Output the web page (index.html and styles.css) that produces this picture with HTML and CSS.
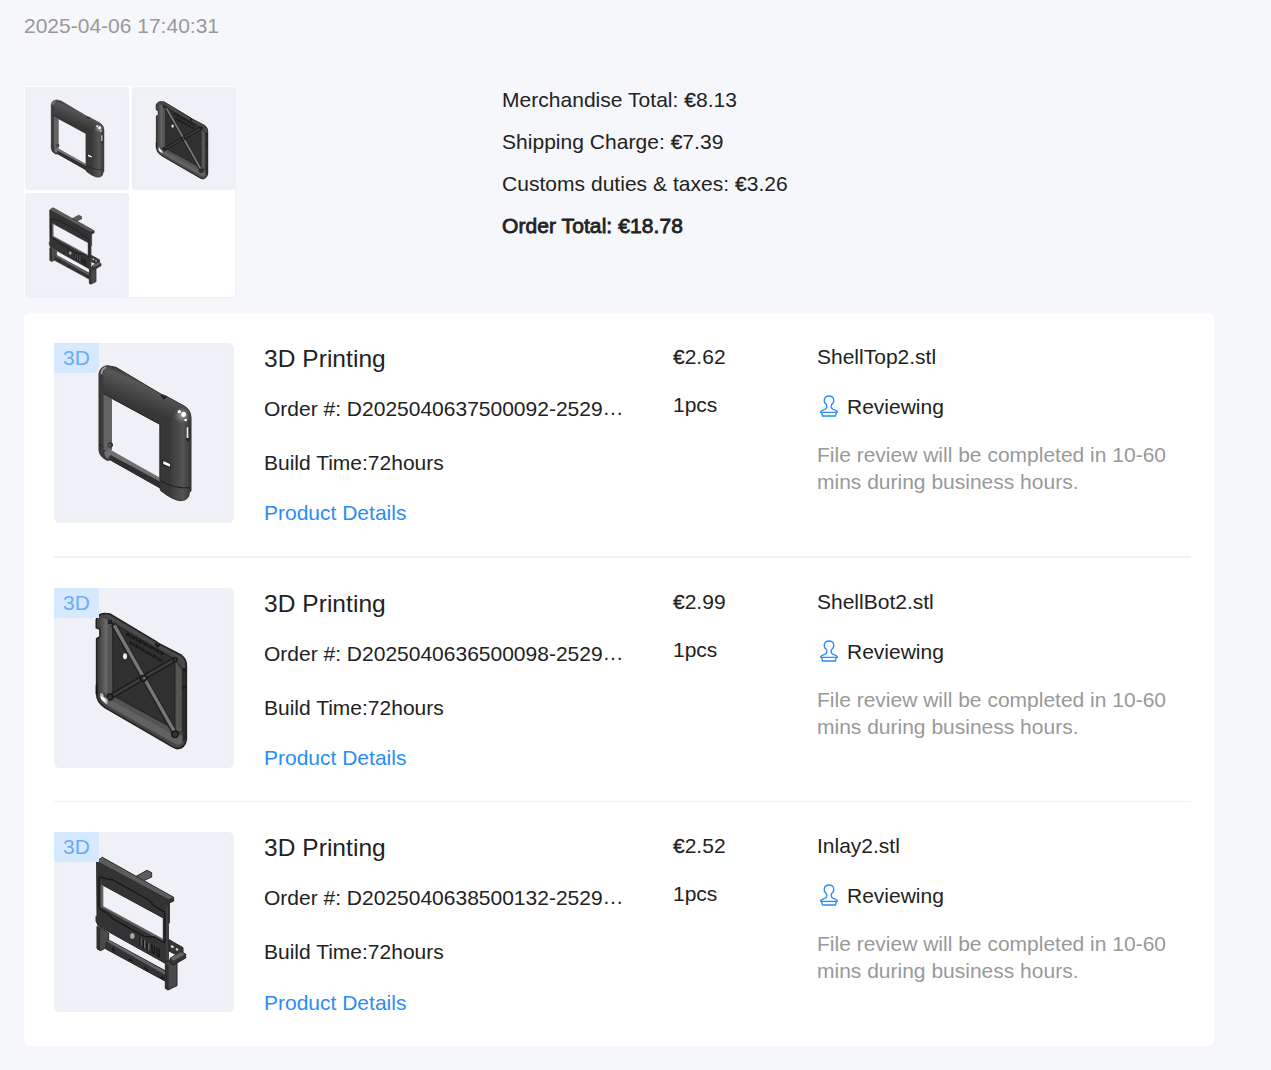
FILE: index.html
```html
<!DOCTYPE html>
<html lang="en">
<head>
<meta charset="utf-8">
<title>Order details</title>
<link rel="stylesheet" href="styles.css">
</head>
<body>
<svg class="defs" aria-hidden="true">
  <defs>
    <linearGradient id="shell" gradientUnits="userSpaceOnUse" x1="290" y1="130" x2="250" y2="230">
      <stop offset="0" stop-color="#353535"/><stop offset=".2" stop-color="#575757"/><stop offset=".5" stop-color="#474747"/><stop offset=".85" stop-color="#363636"/>
    </linearGradient>
    <linearGradient id="side" x1="0" y1="0" x2="1" y2="0">
      <stop offset="0" stop-color="#363636"/><stop offset=".3" stop-color="#383838"/><stop offset=".75" stop-color="#555"/><stop offset="1" stop-color="#383838"/>
    </linearGradient>
    <linearGradient id="lip" x1="0" y1="0" x2="1" y2="0">
      <stop offset="0" stop-color="#3e3e3e"/><stop offset=".6" stop-color="#696969"/><stop offset="1" stop-color="#505050"/>
    </linearGradient>
    <radialGradient id="shine"><stop offset="0" stop-color="#aaa"/><stop offset=".5" stop-color="#777" stop-opacity=".7"/><stop offset="1" stop-color="#555" stop-opacity="0"/></radialGradient>
    <symbol id="shell-top" viewBox="12 24 540 540">
      <path fill="url(#shell)" fill-rule="evenodd" stroke="#303030" stroke-width="3" d="M147 115Q151 94 173 92L198 97L334 178L346 182L404 214Q422 225 423 248V468L418 472Q418 496 392 497Q369 496 332 467L330 459L181 375L171 376Q148 364 147 346ZM160 176V344L181 348L330 436V268Z"/>
      <path fill="url(#side)" d="M330 266L362 262Q368 228 388 222Q420 218 422 248V468L418 472Q418 495 392 496Q369 495 332 466L330 459Z"/>
      <ellipse cx="397" cy="241" rx="28" ry="27" fill="url(#shine)"/>
      <path fill="#626262" d="M160 177L186 191V344L178 350L160 344Z"/>
      <path fill="#3b3b3b" d="M149 120L160 110V345L171 374Q150 362 149 344Z"/>
      <path fill="#707070" d="M162 352L176 342L192 350L330 428V440L182 360L172 372Q164 366 162 352Z"/>
      <path fill="#2f2f2f" d="M180 361L331 441V460L181 375Z"/>
      <path d="M160 176L330 268V438" fill="none" stroke="#2b2b2b" stroke-width="3"/>
      <path d="M148 328L160 336M332 437Q375 463 420 458" fill="none" stroke="#1e1e1e" stroke-width="3"/>
      <circle cx="181" cy="330" r="8" fill="#333"/><circle cx="179" cy="331" r="3" fill="#777"/>
      <path d="M155 118Q153 103 168 97" fill="none" stroke="#999" stroke-width="5"/>
      <path d="M334 180L342 190L349 184" fill="none" stroke="#181818" stroke-width="5"/>
      <g fill="#fff"><circle cx="388" cy="230" r="5"/><ellipse cx="401" cy="238" rx="7" ry="8"/><circle cx="407" cy="255" r="4"/></g>
      <path d="M410 274L423 280V308L410 306Z" fill="#333"/><path d="M410 277H415V309H410Z" fill="#eee"/><path d="M407 309L420 312L412 321Z" fill="#222"/>
      <path d="M335 374L363 385V400L337 391Z" fill="#252525"/><path d="M340 378L360 387V395L340 387Z" fill="#fff"/>
    </symbol>
    <symbol id="shell-bottom" viewBox="12 24 540 540">
      <path fill="#454545" stroke="#232323" stroke-width="5" d="M139 143V120Q144 100 165 101L180 102L317 184L330 193L394 226Q409 237 409 258V478Q405 504 382 506Q370 503 350 490L165 383Q140 365 140 342V176L150 170V148Z"/>
      <path fill="url(#lip)" d="M145 126Q150 111 166 116L184 127V347L164 338L145 343V176L152 170V144Z"/>
      <path fill="#626262" d="M165 339L190 357L370 458L396 467V486Q393 500 375 491L174 377Z"/>
      <path fill="#545454" d="M174 118L188 130V350L366 446V462L180 359L172 340Z"/>
      <path fill="#303030" stroke="#202020" stroke-width="3" d="M188 129L375 238V448L189 345Z"/>
      <path fill="#555" stroke="#292929" stroke-width="3" d="M375 238L397 270V454L383 458L375 446Z"/>
      <path fill="#292929" d="M398 263H409V478L399 484Z"/>
      <path fill="none" stroke="#4c4c4c" stroke-width="6" d="M165 104L317 193L394 234Q402 242 402 265"/>
      <path fill="none" stroke="#1b1b1b" stroke-width="16" d="M182 350L375 238"/><path fill="none" stroke="#3d3d3d" stroke-width="8" d="M182 350L375 238"/>
      <path fill="none" stroke="#222" stroke-width="17" d="M190 132L377 463"/><path fill="none" stroke="#777" stroke-width="10" d="M193 136L374 456"/>
      <g fill="#333" stroke="#171717" stroke-width="4"><circle cx="180" cy="126" r="5"/><circle cx="375" cy="239" r="6"/><circle cx="280" cy="295" r="9"/><circle cx="180" cy="351" r="9"/><circle cx="375" cy="463" r="10"/></g>
      <circle cx="283" cy="294" r="4" fill="#707070"/>
      <g fill="none" stroke="#171717" stroke-width="9" stroke-dasharray="9 3 5 3"><path d="M230 162L340 222"/><path d="M239 187L338 244"/></g>
      <path fill="none" stroke="#171717" stroke-width="6" d="M316 190L323 199L330 194M397 325L409 320M400 265L407 275M140 314V342"/>
      <ellipse cx="225" cy="229" rx="6" ry="9" fill="#eee"/>
      <path d="M150 341Q161 337 161 350L173 357L172 374Q150 363 150 341Z" fill="#bbb"/><path d="M151 349Q162 349 169 367Q152 362 151 349Z" fill="#fff"/>
    </symbol>
    <symbol id="inlay" viewBox="12 21 540 540">
      <path fill="#5c5c5c" stroke="#292929" stroke-width="3" d="M251 158L291 136L305 143V156L270 172L252 166Z"/>
      <path fill="#333" d="M253 158L270 164V173L252 166Z"/>
      <path fill="#4b4b4b" stroke="#292929" stroke-width="3" d="M141 304L176 324V365L151 377L141 371Z"/>
      <path fill="#303030" d="M141 304L151 309V377L141 372Z"/>
      <path fill="#333" fill-rule="evenodd" stroke="#262626" stroke-width="3" d="M140 109L157 97L371 217V228L358 234V293L355 298V420L344 414L145 303L138 288V275L141 271ZM152 177V246L340 350V279Z"/>
      <path fill="#5d5d5d" d="M142 108L157 98L369 217L356 223Z"/>
      <path fill="#606060" d="M152 177L160 182V244L339 341V350L152 246Z"/>
      <path fill="#444" d="M348 246L353 243V404L348 407Z"/>
      <path fill="none" stroke="#171717" stroke-width="4" d="M148 155L177 164L186 163L296 225L312 242L345 262M147 249L174 267L188 281L282 334L313 336L345 354M147 156V247M345 264V352"/>
      <path fill="#333" stroke="#222" stroke-width="3" d="M168 353L180 347L345 437V468L168 372Z"/>
      <path fill="#656565" d="M169 349L181 347L345 439V449Z"/>
      <path fill="none" stroke="#171717" stroke-width="5" d="M187 369L193 379M235 402L248 407M282 426L294 438M332 457L342 459"/>
      <path fill="#4a4a4a" stroke="#272727" stroke-width="3" d="M346 415L381 394V482L354 495L346 490Z"/><path fill="#303030" d="M346 417L356 420V495L346 490Z"/>
      <path fill="#363636" stroke="#222" stroke-width="3" d="M357 344L399 368V383L407 387V399L370 420L360 416V400L378 389L357 378Z"/>
      <path fill="#666" d="M362 399L393 382L405 388L370 407Z"/>
      <path fill="none" stroke="#ddd" stroke-width="6" d="M363 363L371 367M378 372L384 375"/>
      <ellipse cx="247" cy="333" rx="8" ry="10" fill="#aaa" stroke="#222" stroke-width="2"/>
      <g fill="none" stroke="#6b6b6b" stroke-width="4"><path d="M273 340V362M284 346V369M296 354V376"/></g><g fill="none" stroke="#161616" stroke-width="4"><path d="M269 338V362M280 344V369M291 352V376M306 358V382L313 386V363M321 366V391L328 395V371"/></g>
    </symbol>
    <symbol id="stamp" viewBox="0 0 20 22">
      <path fill="none" stroke="#2a8df5" stroke-width="1.3" stroke-linejoin="round" d="M7.400 9.600C3.900 7 4.600 1 10 1S16.100 7 12.600 9.600C11.900 11.300 12.300 13.500 14.200 14.300C16.500 15 18.400 15.300 18.400 17.300H1.600C1.600 15.300 3.500 15 5.800 14.300C7.700 13.500 8.100 11.300 7.400 9.600ZM2.700 17.500L3.500 21H16.500L17.300 17.500"/>
    </symbol>
  </defs>
</svg>
<main class="page">
  <time class="date">2025-04-06 17:40:31</time>
  <section class="summary">
    <div class="thumbs">
      <svg class="thumb"><use href="#shell-top"/></svg>
      <svg class="thumb"><use href="#shell-bottom"/></svg>
      <svg class="thumb"><use href="#inlay"/></svg>
    </div>
    <div class="totals">
      <p>Merchandise Total: <span class="euro">€</span>8.13</p>
      <p>Shipping Charge: <span class="euro">€</span>7.39</p>
      <p>Customs duties &amp; taxes: <span class="euro">€</span>3.26</p>
      <p class="grand">Order Total: €18.78</p>
    </div>
  </section>
  <section class="card">
    <article class="item">
      <div class="preview"><svg class="model"><use href="#shell-top"/></svg><span class="tag tag-round">3D</span></div>
      <div class="info">
        <h2>3D Printing</h2>
        <p class="number">Order #: D2025040637500092-2529<span class="dots">…</span></p>
        <p class="build">Build Time:72hours</p>
        <a class="details">Product Details</a>
      </div>
      <div class="price"><p><span class="euro">€</span>2.62</p><p class="qty">1pcs</p></div>
      <div class="file">
        <p>ShellTop2.stl</p>
        <p class="status"><svg class="stamp"><use href="#stamp"/></svg>Reviewing</p>
        <p class="note">File review will be completed in 10-60<br>mins during business hours.</p>
      </div>
    </article>
    <article class="item">
      <div class="preview"><svg class="model"><use href="#shell-bottom"/></svg><span class="tag">3D</span></div>
      <div class="info">
        <h2>3D Printing</h2>
        <p class="number">Order #: D2025040636500098-2529<span class="dots">…</span></p>
        <p class="build">Build Time:72hours</p>
        <a class="details">Product Details</a>
      </div>
      <div class="price"><p><span class="euro">€</span>2.99</p><p class="qty">1pcs</p></div>
      <div class="file">
        <p>ShellBot2.stl</p>
        <p class="status"><svg class="stamp"><use href="#stamp"/></svg>Reviewing</p>
        <p class="note">File review will be completed in 10-60<br>mins during business hours.</p>
      </div>
    </article>
    <article class="item">
      <div class="preview"><svg class="model"><use href="#inlay"/></svg><span class="tag">3D</span></div>
      <div class="info">
        <h2>3D Printing</h2>
        <p class="number">Order #: D2025040638500132-2529<span class="dots">…</span></p>
        <p class="build">Build Time:72hours</p>
        <a class="details">Product Details</a>
      </div>
      <div class="price"><p><span class="euro">€</span>2.52</p><p class="qty">1pcs</p></div>
      <div class="file">
        <p>Inlay2.stl</p>
        <p class="status"><svg class="stamp"><use href="#stamp"/></svg>Reviewing</p>
        <p class="note">File review will be completed in 10-60<br>mins during business hours.</p>
      </div>
    </article>
  </section>
</main>
</body>
</html>
```
FILE: styles.css
```css
* { box-sizing: border-box; }
body {
  margin: 0;
  background: #f5f7fa;
  color: #222;
  font: 21px/28px "Liberation Sans", Arial, sans-serif;
}
p, h2 { margin: 0; }
.defs { position: absolute; width: 0; height: 0; }
.page { height: 1070px; padding: 12px 57px 0 24px; overflow: hidden; }
.date { display: block; color: #999; }
.summary { display: flex; height: 212px; margin: 46px 0 15px; }
.thumbs {
  display: grid;
  grid-template-columns: 104px 103px;
  grid-template-rows: 103px 104px;
  gap: 3px;
  width: 212px;
  padding: 1px 0 0 1px;
  background: #fff;
  border: 1px solid #edf1f6;
  border-width: 0 1px 1px 0;
  border-radius: 5px;
}
.thumb { width: 100%; height: 100%; background: #eff1f6; box-shadow: inset 0 0 0 3px #edf1f6; border-radius: 4px; }
.totals { margin-left: 266px; letter-spacing: .03px; }
.totals p { height: 42px; }
.totals .grand { letter-spacing: .08px; -webkit-text-stroke: .8px #222; }
.euro { -webkit-text-stroke: .3px #222; }
.card { padding: 0 23px 0 30px; background: #fff; border-radius: 6px; }
.item {
  display: grid;
  grid-template-columns: 180px 379px 114px 374px;
  column-gap: 30px;
  height: 244px;
  padding-top: 30px;
  border-bottom: 1px solid #f0f1f6;
}
.item:first-child { height: 245px; border-bottom-width: 2px; }
.item:last-child { border-bottom: 0; }
.preview { position: relative; height: 180px; }
.model { display: block; width: 180px; height: 180px; background: #eff1f6; box-shadow: inset 0 0 0 5px #edf1f6; border-radius: 6px; }
.model, .thumb { overflow: hidden; }
.tag {
  position: absolute;
  top: 0;
  left: 0;
  width: 45px;
  height: 30px;
  color: #69adf8;
  line-height: 30px;
  text-align: center;
  background: #d6e9ff;
}
.tag-round { border-radius: 0 0 6px 0; }
h2 { font-size: 24.5px; font-weight: 400; line-height: 32px; letter-spacing: .05px; }
.number { margin-top: 20px; white-space: nowrap; }
.dots { position: relative; top: -1px; }
.build { margin-top: 26px; }
.details { display: block; margin-top: 22px; color: #2a8df5; }
.item:last-child .details { margin-top: 23px; }
.qty { margin-top: 20px; }
.status { display: flex; align-items: center; height: 28px; margin-top: 22px; }
.stamp { width: 20px; height: 22px; margin: 0 8px 2px 2px; }
.note { margin-top: 20px; color: #999; line-height: 27px; }
```
